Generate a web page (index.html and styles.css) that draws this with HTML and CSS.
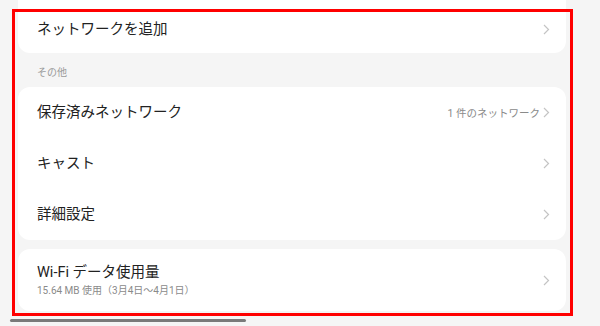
FILE: index.html
```html
<!DOCTYPE html>
<html lang="ja">
<head>
<meta charset="utf-8">
<link rel="stylesheet" href="styles.css">
</head>
<body>
<div class="page">
  <div class="card card-first">
    <div class="row row-first">
      <span class="title">ネットワークを追加</span>
      <span class="chev"><svg width="7" height="11" viewBox="0 0 7 11"><path d="M1 1 L5.5 5.5 L1 10" fill="none" stroke="#c4c4c4" stroke-width="1.2"/></svg></span>
    </div>
  </div>
  <div class="section">その他</div>
  <div class="card">
    <div class="row">
      <span class="title">保存済みネットワーク</span>
      <span class="right"><span class="value">1 件のネットワーク</span><span class="chev"><svg width="7" height="11" viewBox="0 0 7 11"><path d="M1 1 L5.5 5.5 L1 10" fill="none" stroke="#c4c4c4" stroke-width="1.2"/></svg></span></span>
    </div>
    <div class="row">
      <span class="title">キャスト</span>
      <span class="chev"><svg width="7" height="11" viewBox="0 0 7 11"><path d="M1 1 L5.5 5.5 L1 10" fill="none" stroke="#c4c4c4" stroke-width="1.2"/></svg></span>
    </div>
    <div class="row">
      <span class="title">詳細設定</span>
      <span class="chev"><svg width="7" height="11" viewBox="0 0 7 11"><path d="M1 1 L5.5 5.5 L1 10" fill="none" stroke="#c4c4c4" stroke-width="1.2"/></svg></span>
    </div>
  </div>
  <div class="card card-last">
    <div class="row row-tall">
      <span class="texts">
        <span class="title">Wi-Fi データ使用量</span>
        <span class="sub">15.64 MB 使用（3月4日〜4月1日）</span>
      </span>
      <span class="chev"><svg width="7" height="11" viewBox="0 0 7 11"><path d="M1 1 L5.5 5.5 L1 10" fill="none" stroke="#c4c4c4" stroke-width="1.2"/></svg></span>
    </div>
  </div>
</div>
<div class="highlight"></div>
<div class="scrollbar"></div>
</body>
</html>
```

FILE: styles.css
```css
html, body {
  margin: 0;
  padding: 0;
}
body {
  width: 600px;
  height: 326px;
  overflow: hidden;
  background: #f5f5f5;
  font-family: "Roboto", "Noto Sans CJK JP", sans-serif;
  color: #222;
  position: relative;
}
.page {
  padding: 0 34px 0 18px;
  display: flex;
  flex-direction: column;
}
.card {
  background: #fff;
  border-radius: 12px;
  display: flex;
  flex-direction: column;
}
.card-first {
  border-radius: 0 0 12px 12px;
  padding-top: 6px;
}
.card-last {
  margin-top: 9px;
}
.row {
  height: 51px;
  display: flex;
  align-items: center;
  justify-content: space-between;
  padding: 0 16px 0 19px;
}
.row-first {
  height: 47px;
}
.row-tall {
  height: 62px;
}
.title {
  font-size: 14.5px;
  line-height: 18px;
  color: #222;
}
.texts {
  display: flex;
  flex-direction: column;
  gap: 2px;
  padding-top: 2px;
}
.sub {
  font-size: 10px;
  line-height: 14px;
  color: #8a8a8a;
}
.section {
  font-size: 10px;
  line-height: 12px;
  color: #9a9a9a;
  padding: 14px 0 8px 19px;
}
.right {
  display: flex;
  align-items: center;
  gap: 3px;
}
.value {
  font-size: 10.5px;
  color: #8a8a8a;
}
.chev {
  display: flex;
  align-items: center;
  width: 7px;
  height: 11px;
}
.highlight {
  position: absolute;
  left: 12px;
  top: 9px;
  width: 555px;
  height: 301px;
  border: 3px solid #ff0000;
}
.scrollbar {
  position: absolute;
  left: 10px;
  top: 319px;
  width: 236px;
  height: 3px;
  border-radius: 2px;
  background: #7a7a7a;
}
```
